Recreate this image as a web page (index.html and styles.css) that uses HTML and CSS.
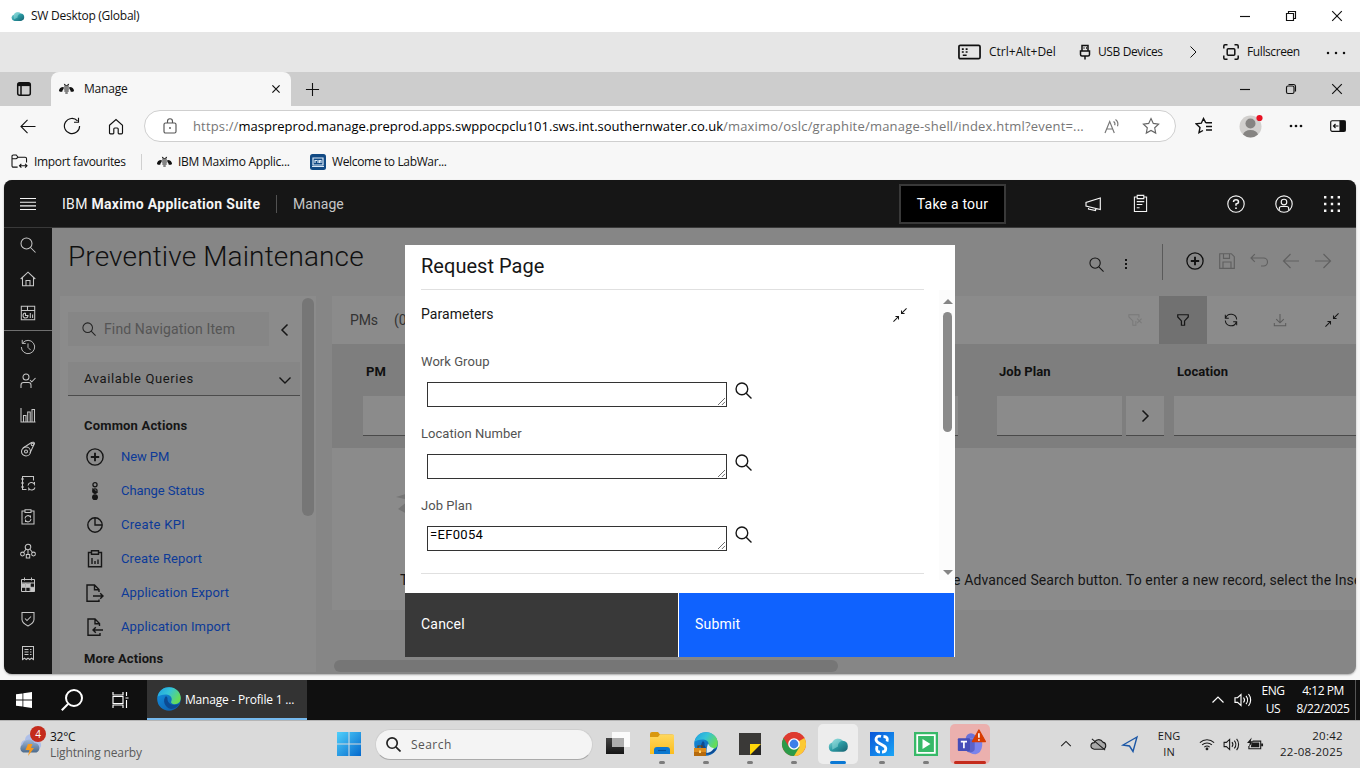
FILE: index.html
```html
<!DOCTYPE html>
<html lang="en">
<head>
<meta charset="utf-8">
<title>Manage</title>
<link rel="stylesheet" href="styles.css">
</head>
<body>
<svg class="defs" width="0" height="0" aria-hidden="true">
  <defs>
    <linearGradient id="gCloud" x1="0" y1="0" x2="1" y2="1"><stop offset="0" stop-color="#8fe0e0"/><stop offset=".5" stop-color="#2a9aa3"/><stop offset="1" stop-color="#17606f"/></linearGradient>
    <linearGradient id="gWin" x1="0" y1="0" x2="1" y2="1"><stop offset="0" stop-color="#4fd0fb"/><stop offset="1" stop-color="#0568cc"/></linearGradient>
    <linearGradient id="gEdgeA" x1="0" y1="0" x2="1" y2=".5"><stop offset="0" stop-color="#1f9fe0"/><stop offset=".5" stop-color="#35c3d8"/><stop offset="1" stop-color="#66dc58"/></linearGradient>
    <linearGradient id="gEdgeB" x1="0" y1="0" x2="1" y2="1"><stop offset="0" stop-color="#1593e2"/><stop offset="1" stop-color="#0b56a5"/></linearGradient>
    <linearGradient id="gFold" x1="0" y1="0" x2="0" y2="1"><stop offset="0" stop-color="#ffd85e"/><stop offset="1" stop-color="#fbbd1e"/></linearGradient>
    <linearGradient id="gStorm" x1="0" y1="0" x2="0" y2="1"><stop offset="0" stop-color="#9fb6d6"/><stop offset="1" stop-color="#4c6b8c"/></linearGradient>
    <linearGradient id="gTask" x1="0" y1="0" x2="0" y2="1"><stop offset="0" stop-color="#444"/><stop offset="1" stop-color="#151515"/></linearGradient>
    <linearGradient id="gSnag" x1="0" y1="0" x2="1" y2="1"><stop offset="0" stop-color="#0a55d8"/><stop offset="1" stop-color="#1aa6f6"/></linearGradient>
  </defs>
  <symbol id="cloud" viewBox="0 0 20 16"><path d="M5 15a4.500 4.500 0 0 1-1-8.800A6 6 0 0 1 14 4.500a5.300 5.300 0 0 1 .5 10.500z" fill="url(#gCloud)"/><path d="M4 6.200a6 6 0 0 1 10-1.700c-3 .3-5 3-4.500 5.500L4 13z" fill="#a9e8e6" opacity=".45"/></symbol>
  <symbol id="min" viewBox="0 0 16 16"><path d="M3 8.500h10"/></symbol>
  <symbol id="restore" viewBox="0 0 16 16"><path d="M3.500 5.500h7v7h-7zM5.500 5.500v-2h7v7h-2"/></symbol>
  <symbol id="restore-r" viewBox="0 0 16 16"><rect x="3.500" y="5" width="7.500" height="7.500" rx="1.500"/><path d="M5.500 3.500h5a2 2 0 0 1 2 2v5"/></symbol>
  <symbol id="close" viewBox="0 0 16 16"><path d="M3.200 3.200l9.600 9.600M12.800 3.200l-9.600 9.600"/></symbol>
  <symbol id="keyboard" viewBox="0 0 24 16"><rect x="1" y="1" width="22" height="14" rx="1.500" stroke-width="1.800"/><path d="M4 5h2M8 5h2M4 8h2M8 8h2M5 11.500h4" stroke-width="1.600"/></symbol>
  <symbol id="usb" viewBox="0 0 12 16"><path d="M3 7V1.500h6V7M1.500 7h9v3.500q0 1.500-1.500 1.500H3q-1.500 0-1.500-1.500zM6 12v3.500M4.500 4h1M7 4h1" stroke-width="1.500"/></symbol>
  <symbol id="full" viewBox="0 0 16 16"><path d="M.8 4.500V2q0-1.200 1.200-1.200h2.500M11.500.8H14q1.200 0 1.200 1.200v2.500M15.200 11.500V14q0 1.200-1.200 1.200h-2.500M4.500 15.200H2Q.8 15.200.8 14v-2.500"/><rect x="4.200" y="4.800" width="7.600" height="6.400" rx="1"/></symbol>
  <symbol id="chev-r" viewBox="0 0 16 16"><path d="M5.500 2.500L11 8l-5.500 5.500"/></symbol>
  <symbol id="chev-l" viewBox="0 0 16 16"><path d="M10.500 2.500L5 8l5.500 5.500"/></symbol>
  <symbol id="chev-d" viewBox="0 0 16 16"><path d="M2.500 5.500L8 11l5.500-5.500"/></symbol>
  <symbol id="chev-u" viewBox="0 0 16 16"><path d="M2.500 10.500L8 5l5.500 5.500"/></symbol>
  <symbol id="dots" viewBox="0 0 20 4"><g fill="currentColor" stroke="none"><circle cx="2" cy="2" r="1.250"/><circle cx="10" cy="2" r="1.250"/><circle cx="18" cy="2" r="1.250"/></g></symbol>
  <symbol id="dots-s" viewBox="0 0 14 4"><g fill="currentColor" stroke="none"><circle cx="2" cy="2" r="1.350"/><circle cx="7" cy="2" r="1.350"/><circle cx="12" cy="2" r="1.350"/></g></symbol>
  <symbol id="tabs" viewBox="0 0 16 16"><rect x="1.700" y="1.700" width="12.600" height="12.600" rx="2"/><path d="M2 3.500h12" stroke-width="3.200"/><path d="M5 4v10"/></symbol>
  <symbol id="bee" viewBox="0 0 18 14"><g fill="currentColor" stroke="none"><path d="M1 9C1.200 6.500 3.200 4.800 6 5v1.800L4.800 8.500 4.500 10H2.200zM17 9C16.800 6.500 14.800 4.800 12 5v1.800l1.200 1.700.3 1.500h2.300zM6.200 1.500l1.300.2.700 1h1.600l.7-1 1.300-.2-.8 2H7zM6.500 4.300h5v1.200h-5zM6.500 6.400h5v1.200h-5zM6.700 8.500h4.600v1.200H6.700zM7.700 10.600h2.600v1.200H7.700z"/></g></symbol>
  <symbol id="plus" viewBox="0 0 16 16"><path d="M8 1v14M1 8h14"/></symbol>
  <symbol id="back" viewBox="0 0 18 16"><path d="M17 8H1.500M8.500 1L1.500 8l7 7"/></symbol>
  <symbol id="fwd" viewBox="0 0 18 16"><path d="M1 8h15.500M9.500 1l7 7-7 7"/></symbol>
  <symbol id="reload" viewBox="0 0 18 18"><path d="M14.500 3.800A7.600 7.600 0 1 0 16.600 9M15.500.8v4.400h-4.500"/></symbol>
  <symbol id="home" viewBox="0 0 16 17"><path d="M1.500 7.200L8 1.500l6.500 5.700v7.600q0 1-1 1H11q-.8 0-.8-.8V11q0-1-1-1H6.800q-1 0-1 1v4q0 .8-.8.800H2.500q-1 0-1-1z"/></symbol>
  <symbol id="lock" viewBox="0 0 14 16"><rect x="1" y="5" width="12" height="10" rx="1.500"/><path d="M4.500 5V3.200a2.500 2.500 0 0 1 5 0V5"/><circle cx="7" cy="10" r=".9" fill="currentColor" stroke="none"/></symbol>
  <symbol id="read" viewBox="0 0 16 16"><path d="M1 15L5.700 3.500 10.300 15M2.600 11h6.200M9.500 3.500a3 3 0 0 1 1.200 3.700M11.500 1.500a6 6 0 0 1 2 6.700"/></symbol>
  <symbol id="star" viewBox="0 0 18 18"><path d="M9 1.500l2.300 4.900 5.300.700-3.900 3.700 1 5.300L9 13.500l-4.700 2.600 1-5.300L1.400 7.100l5.300-.7z"/></symbol>
  <symbol id="favs" viewBox="0 0 18 18"><path d="M10.800 5.800L8.500 1.500 6.300 6.200 1.200 6.900l3.800 3.600-1 5.200 4-2.200M10.800 5.800H17M11 9.500h6M11 13h6" stroke-width="1.400"/></symbol>
  <symbol id="side" viewBox="0 0 16 12"><rect x=".7" y=".7" width="14.600" height="10.600" rx="1.500"/><path d="M10 1h5v10h-5z" fill="currentColor"/><path d="M8.500 6H3.500M5.500 4l-2 2 2 2"/></symbol>
  <symbol id="import" viewBox="0 0 18 16"><path d="M7 14H2.500Q1 14 1 12.500v-10Q1 1 2.500 1h3l2 2.500H15q1.500 0 1.500 1.500v4M1 5h4.500l2-1.500M9 12.500h8M11 10.500l-2 2 2 2M15 10.500l2 2-2 2"/></symbol>
  <symbol id="menu" viewBox="0 0 16 12"><path d="M0 .5h16M0 4.200h16M0 7.800h16M0 11.500h16"/></symbol>
  <symbol id="horn" viewBox="0 0 18 16"><path d="M16.300 2v11.500L2 10V6.500zM4.500 10.800V13l7 1.500v-2.200"/></symbol>
  <symbol id="clip" viewBox="0 0 16 20"><path d="M4.500 3H1.500v15.500h13V3h-3M4.500 1.300h7v3.500h-7zM4 8h8M4 11h6M4 14.500h3"/></symbol>
  <symbol id="help" viewBox="0 0 18 18"><circle cx="9" cy="9" r="8.200"/><path d="M6.500 7q0-2.200 2.500-2.200T11.500 7Q11.500 8.500 9 9v1.800" stroke-width="1.500"/><circle cx="9" cy="13.200" r=".9" fill="currentColor" stroke="none"/></symbol>
  <symbol id="user" viewBox="0 0 18 18"><circle cx="9" cy="9" r="8.200"/><circle cx="9" cy="7" r="2.800"/><path d="M4.300 15v-1.500q0-2 2-2h5.400q2 0 2 2V15"/></symbol>
  <symbol id="grid" viewBox="0 0 18 18"><g fill="currentColor" stroke="none"><path d="M1 1h2.400v2.400H1zM7.800 1h2.400v2.400H7.800zM14.600 1H17v2.400h-2.400zM1 7.800h2.400v2.400H1zM7.800 7.800h2.400v2.400H7.800zM14.600 7.800H17v2.400h-2.400zM1 14.600h2.400V17H1zM7.800 14.600h2.400V17H7.800zM14.600 14.600H17V17h-2.400z"/></g></symbol>
  <symbol id="search" viewBox="0 0 16 16"><circle cx="6.500" cy="6.500" r="5.500"/><path d="M10.500 10.500L15.500 15.500"/></symbol>
  <symbol id="chome" viewBox="0 0 16 16"><path d="M.7 8L8 1.200 15.300 8M2.500 6.500v8.300h11V6.500M6 14.800V9.500h4v5.300"/></symbol>
  <symbol id="dash" viewBox="0 0 16 16"><path d="M1.300 1.300h13.400v13.400H1.300zM1.300 5.500h13.400M7.500 1.500v4M10.300 8v5M12.600 9.500V13M5.500 8v2.500H8A2.500 2.500 0 1 1 5.500 8"/></symbol>
  <symbol id="hist" viewBox="0 0 18 18"><path d="M3 4.500A7.500 7.500 0 1 1 1.500 9M2.500 1v4h4M9 5v4.500l3 3"/></symbol>
  <symbol id="ucheck" viewBox="0 0 16 16"><circle cx="6" cy="4" r="3"/><path d="M1 15v-3q0-2.500 2.500-2.500h5Q11 9.500 11 12v3M10 7l1.800 1.800L15.500 5"/></symbol>
  <symbol id="bars" viewBox="0 0 16 16"><path d="M1 1v14h14.500M3.500 15V8.500H6V15M7.700 15V5h2.500v10M12 15V2.500h2.500V15"/></symbol>
  <symbol id="meteor" viewBox="0 0 16 16"><circle cx="6" cy="10.500" r="4.500"/><circle cx="6" cy="10.500" r="1.500"/><path d="M3 7l8.500-5.500q2.500-1 3 1L10 12"/><circle cx="12.500" cy="3.500" r="1.300"/></symbol>
  <symbol id="book" viewBox="0 0 16 16"><path d="M6.500 14.500H2.500v-13h11v4M1 4h3M1 8h3M1 12h3M8 10.500a3.500 3.500 0 0 1 6.500-1.300V7M15 12.500a3.500 3.500 0 0 1-6.200 1V15.500"/></symbol>
  <symbol id="wclip" viewBox="0 0 16 16"><path d="M5 2H2v13h12V2h-3M5 .8h6v2.700H5zM5 9.500a3 3 0 0 1 5.500-1.500V6.500M11 10a3 3 0 0 1-5.500 1.500V13"/></symbol>
  <symbol id="net" viewBox="0 0 16 16"><circle cx="8" cy="4" r="2.800"/><path d="M6 6.200L3.800 9M10 6.200L12.200 9M8 7v4M6.300 11.500h3.400v3.500H6.300z"/><circle cx="2.500" cy="11" r="1.900"/><circle cx="13.500" cy="11" r="1.900"/></symbol>
  <symbol id="cal" viewBox="0 0 16 16"><path d="M1.500 2.500h13v12h-13zM1.500 6h13M4.500.5v3M11.500.5v3M1.500 10.300h13M5.800 6v8.500M10.200 6v8.500" stroke-width="1"/><path d="M6 6.500h4v3.500H6zM10.500 10.500h4v4h-4zM2 6.500h3.500v3.500H2z" fill="currentColor" stroke="none"/></symbol>
  <symbol id="shield" viewBox="0 0 16 16"><path d="M2 1.500h12v7q0 3.500-6 6.500-6-3-6-6.500zM5 7.500l2 2L11 5.500"/></symbol>
  <symbol id="receipt" viewBox="0 0 16 16"><path d="M2.500 1.500h11v13l-2-1.300-1.800 1.300L8 13.200l-1.800 1.300-1.700-1.300-2 1.300zM4.500 4.500h4M10 4.500h1.500M4.500 7h4M10 7h1.500M4.500 9.500h4M10 9.500h1.500"/></symbol>
  <symbol id="addc" viewBox="0 0 18 18"><circle cx="9" cy="9" r="8.100"/><path d="M9 4.800v8.400M4.800 9h8.400" stroke-width="1.900"/></symbol>
  <symbol id="status" viewBox="0 0 8 20"><circle cx="4" cy="3" r="2.300"/><circle cx="4" cy="10" r="2.300"/><path d="M1.800 8L6 11.500 4 12.500 1.800 11z" fill="currentColor"/><circle cx="4" cy="17" r="2.600" fill="currentColor"/></symbol>
  <symbol id="pie" viewBox="0 0 18 18"><circle cx="9" cy="9" r="7.200"/><path d="M9 2v7h7"/></symbol>
  <symbol id="rep" viewBox="0 0 18 18"><path d="M5.500 2.500h-3v14.300h13V2.500h-3M5.500.8h7v3.500h-7zM6 14V8M9 14v-3M12 14V9.500"/></symbol>
  <symbol id="exp" viewBox="0 0 18 18"><path d="M13 15.500v1.700H1V1h7.500L13 5.500V8M8.500 1v4.700H13M7 12h10M14.200 9.200L17 12l-2.800 2.800"/></symbol>
  <symbol id="imp" viewBox="0 0 18 18"><path d="M14 15v2.200H2V1h7L13.500 5.500V8M9 1v4.700h4.500M17 12H7M9.800 9.200L7 12l2.800 2.800"/></symbol>
  <symbol id="save" viewBox="0 0 16 16"><path d="M.7.7h11.600l3 3v11.600H.7zM4.500.8v4.500h6V.8M4 15V9h8v6"/></symbol>
  <symbol id="undo" viewBox="0 0 18 16"><path d="M1 5h12.500a4 4 0 0 1 0 8H11M4.800 1.200L1 5l3.800 3.800"/></symbol>
  <symbol id="funnel" viewBox="0 0 16 16"><path d="M2 2h12v2.500L9.800 9v5H6.200V9L2 4.500z"/></symbol>
  <symbol id="funnelx" viewBox="0 0 16 16"><path d="M12.500 5V2H1v2.500L5.500 9v5H9V9M10.500 6.500l5 5M15.500 6.500l-5 5"/></symbol>
  <symbol id="sync" viewBox="0 0 16 16"><path d="M2 5.500A6.500 6.500 0 0 1 14.500 7.500M14 10.500A6.500 6.500 0 0 1 1.500 8.500M1.500 2v4h4M14.500 14v-4h-4"/></symbol>
  <symbol id="down" viewBox="0 0 16 16"><path d="M8 1v10M3.700 7L8 11.200 12.300 7M1.500 11.500v3h13v-3"/></symbol>
  <symbol id="mini" viewBox="0 0 16 16"><path d="M15.500.5l-5.700 5.700M9.700 2.800v3.500h3.500M.5 15.500l5.700-5.700M2.800 9.700h3.500v3.500"/></symbol>
  <symbol id="spk" viewBox="0 0 18 14"><path d="M1 4.700h2.500L7 1.500v11L3.500 9.300H1zM9.500 4.500a4 4 0 0 1 0 5M12 2.800a6.500 6.500 0 0 1 0 8.400M14.500 1a9.500 9.500 0 0 1 0 12"/></symbol>
  <symbol id="edge" viewBox="0 0 24 24"><circle cx="12" cy="12" r="11.800" fill="url(#gEdgeB)"/><path d="M.6 9.500C2 3.500 6.500.2 12 .2 19 .2 23.800 5.200 23.800 11c0 3.800-2.500 6.200-6 6.200-3 0-4.300-1.300-3.600-2.600 1.800-3.600-.8-6.900-4.900-7.200C5.500 7.200 2 8.500.6 9.500z" fill="url(#gEdgeA)"/><path d="M9 9c-4 4-1.500 11.500 5 13 4 0 6.800-2.300 8.300-5.200-6 3-12.500 0-11.800-6.100z" fill="#0c4a92"/></symbol>
</svg>

<div class="screen">
  <header class="vm-title">
    <svg class="vm-logo"><use href="#cloud"/></svg>
    <span class="vm-name">SW Desktop (Global)</span>
    <div class="win-btns"><svg class="i16"><use href="#min"/></svg><svg class="i16"><use href="#restore"/></svg><svg class="i16"><use href="#close"/></svg></div>
  </header>

  <div class="vm-bar">
    <svg class="ic-kb"><use href="#keyboard"/></svg><span class="vb-cad">Ctrl+Alt+Del</span>
    <svg class="ic-usb"><use href="#usb"/></svg><span class="vb-usb">USB Devices</span>
    <svg class="ic-chev"><use href="#chev-r"/></svg>
    <svg class="ic-full"><use href="#full"/></svg><span class="vb-full">Fullscreen</span>
    <svg class="ic-more"><use href="#dots"/></svg>
  </div>

  <div class="tabs">
    <div class="tab-menu"><svg class="i16"><use href="#tabs"/></svg></div>
    <div class="tab"><svg class="bee"><use href="#bee"/></svg><span class="tab-name">Manage</span><svg class="tab-x"><use href="#close"/></svg></div>
    <svg class="tab-plus"><use href="#plus"/></svg>
    <div class="win-btns"><svg class="i16"><use href="#min"/></svg><svg class="i16"><use href="#restore-r"/></svg><svg class="i16"><use href="#close"/></svg></div>
  </div>

  <div class="nav">
    <svg class="n-back"><use href="#back"/></svg>
    <svg class="n-rel"><use href="#reload"/></svg>
    <svg class="n-home"><use href="#home"/></svg>
    <div class="url">
      <svg class="u-lock"><use href="#lock"/></svg>
      <span class="u-text"><span class="u-a">https://</span><span class="u-host">maspreprod.manage.preprod.apps.swppocpclu101.sws.int.southernwater.co.uk</span><span class="u-b">/maximo/oslc/graphite/manage-shell/index.html?event=...</span></span>
      <svg class="u-read"><use href="#read"/></svg><svg class="u-star"><use href="#star"/></svg>
    </div>
    <svg class="n-favs"><use href="#favs"/></svg>
    <svg class="n-avatar" viewBox="0 0 24 24"><circle cx="11.500" cy="12.500" r="11" fill="#d2d0ce"/><circle cx="11.500" cy="9.500" r="5" fill="#868482"/><path d="M4 20.500q1.500-4.500 7.500-4.500t7.500 4.500a11 11 0 0 1-15 0z" fill="#868482"/><circle cx="20.500" cy="4" r="3.100" fill="#e81123"/></svg>
    <svg class="n-more"><use href="#dots-s"/></svg>
    <svg class="n-side"><use href="#side"/></svg>
  </div>

  <div class="favs">
    <svg class="f-imp"><use href="#import"/></svg><span class="f-t1">Import favourites</span><i class="f-sep"></i>
    <svg class="bee"><use href="#bee"/></svg><span class="f-t2">IBM Maximo Applic...</span>
    <svg class="f-lab" viewBox="0 0 16 16"><rect width="16" height="16" rx="2.500" fill="#124a84"/><path d="M3 4h10v7H3zM2 12.500h12" fill="none" stroke="#dbe9f7" stroke-width="1.200"/><path d="M5 9V6.500h2M8 6v3M9.500 9V6.500h1.500V9" fill="none" stroke="#dbe9f7"/></svg><span class="f-t3">Welcome to LabWar...</span>
  </div>

  <div class="page">
    <div class="app">
      <div class="app-head">
        <svg class="h-menu"><use href="#menu"/></svg>
        <span class="h-brand">IBM <b>Maximo Application Suite</b></span>
        <span class="h-prod">Manage</span>
        <span class="h-tour">Take a tour</span>
        <svg class="h-horn"><use href="#horn"/></svg>
        <svg class="h-clip"><use href="#clip"/></svg>
        <svg class="h-help"><use href="#help"/></svg>
        <svg class="h-user"><use href="#user"/></svg>
        <svg class="h-grid"><use href="#grid"/></svg>
      </div>
      <div class="app-body">
        <nav class="rail">
          <div class="rail-top">
            <svg><use href="#search"/></svg><svg><use href="#chome"/></svg><svg><use href="#dash"/></svg>
          </div>
          <svg><use href="#hist"/></svg><svg><use href="#ucheck"/></svg><svg><use href="#bars"/></svg><svg><use href="#meteor"/></svg><svg><use href="#book"/></svg><svg><use href="#wclip"/></svg><svg><use href="#net"/></svg><svg><use href="#cal"/></svg><svg><use href="#shield"/></svg><svg><use href="#receipt"/></svg>
        </nav>
        <main class="main">
          <div class="top">
            <h1>Preventive Maintenance</h1>
            <div class="top-find"><svg class="t-s"><use href="#search"/></svg><svg class="t-dots" viewBox="0 0 4 12"><path d="M1 1h2v2H1zM1 5h2v2H1zM1 9h2v2H1z" fill="currentColor" stroke="none"/></svg></div>
            <div class="top-acts"><svg class="strong"><use href="#addc"/></svg><svg class="sv"><use href="#save"/></svg><svg><use href="#undo"/></svg><svg><use href="#back"/></svg><svg><use href="#fwd"/></svg></div>
          </div>
          <div class="cols">
            <aside class="side">
              <div class="side-main">
                <div class="find"><div class="find-box"><svg><use href="#search"/></svg><span>Find Navigation Item</span></div><svg class="find-chev"><use href="#chev-l"/></svg></div>
                <div class="queries"><span>Available Queries</span><svg><use href="#chev-d"/></svg></div>
                <h2 class="ca">Common Actions</h2>
                <ul class="acts">
                  <li><svg><use href="#addc"/></svg><a class="a1">New PM</a></li>
                  <li><svg><use href="#status"/></svg><a class="a2">Change Status</a></li>
                  <li><svg><use href="#pie"/></svg><a class="a3">Create KPI</a></li>
                  <li><svg><use href="#rep"/></svg><a class="a4">Create Report</a></li>
                  <li><svg><use href="#exp"/></svg><a class="a5">Application Export</a></li>
                  <li><svg><use href="#imp"/></svg><a class="a6">Application Import</a></li>
                </ul>
                <h2 class="ma">More Actions</h2>
              </div>
              <div class="side-scroll"></div>
            </aside>
            <section class="list">
              <div class="list-card">
                <div class="list-bar"><span class="pms">PMs</span><span class="cnt">(0)</span>
                  <div class="tools"><div class="tool faint"><svg><use href="#funnelx"/></svg></div><div class="tool on"><svg><use href="#funnel"/></svg></div><div class="tool"><svg><use href="#sync"/></svg></div><div class="tool dim"><svg><use href="#down"/></svg></div><div class="tool"><svg><use href="#mini"/></svg></div></div>
                </div>
                <div class="cols-head">
                  <div class="c c-pm"><b>PM</b><div class="cell"></div></div>
                  <div class="c c-jp"><b>Job Plan</b><div class="pair"><div class="cell"></div><div class="cell go"><svg><use href="#chev-r"/></svg></div></div></div>
                  <div class="c c-loc"><b>Location</b><div class="cell"></div></div>
                </div>
                <div class="empty">
                  <svg class="empty-art" viewBox="0 0 30 32"><path d="M0 8l26-8v14zM2 20l10-8 12 20z" fill="#757575" stroke="none"/></svg>
                  <p><span class="e1">To</span><span class="e2">e Advanced Search button. To enter a new record, select the Insert</span></p>
                </div>
              </div>
              <div class="hscroll"></div>
            </section>
          </div>
        </main>
      </div>
    </div>
    <div class="dialog">
      <div class="d-title">Request Page</div>
      <div class="d-body">
        <div class="d-form">
          <div class="d-par"><span>Parameters</span><svg><use href="#mini"/></svg></div>
          <label class="l1">Work Group</label>
          <div class="fld"><div class="ta"><svg viewBox="0 0 9 9"><path d="M0 9l9-9M5 9l4-4"/></svg></div><svg class="lk"><use href="#search"/></svg></div>
          <label class="l2">Location Number</label>
          <div class="fld"><div class="ta"><svg viewBox="0 0 9 9"><path d="M0 9l9-9M5 9l4-4"/></svg></div><svg class="lk"><use href="#search"/></svg></div>
          <label class="l3">Job Plan</label>
          <div class="fld"><div class="ta"><span>=EF0054</span><svg viewBox="0 0 9 9"><path d="M0 9l9-9M5 9l4-4"/></svg></div><svg class="lk"><use href="#search"/></svg></div>
        </div>
        <div class="d-scroll"><i class="up"></i><i class="thumb"></i><i class="dn"></i></div>
      </div>
      <div class="d-btns"><div class="cancel">Cancel</div><div class="submit">Submit</div></div>
    </div>
  </div>

  <div class="bar10">
    <svg class="w10" viewBox="0 0 16 16"><path d="M0 2.300l6.500-.9v6.200H0zM7.300 1.300L16 0v7.600H7.300zM0 8.400h6.500v6.200L0 13.700zM7.300 8.400H16V16l-8.700-1.300z" fill="#fff" stroke="none"/></svg>
    <svg class="s10" viewBox="0 0 22 22"><circle cx="13" cy="9" r="8"/><path d="M7 15L.8 21.200"/></svg>
    <svg class="tv" viewBox="0 0 17 16"><path d="M1 0v3h10V0M1 16v-3h10v3M1 4.500h10v7H1zM14.500 0v4M14.500 8v8M13.500 6h3" /></svg>
    <div class="run"><svg><use href="#edge"/></svg><span>Manage - Profile 1 ...</span></div>
    <div class="tray10">
      <svg class="t10-up"><use href="#chev-u"/></svg><svg class="t10-spk"><use href="#spk"/></svg>
      <div class="two lang10"><span>ENG</span><span>US</span></div>
      <div class="two clock10"><span class="ck1">4:12 PM</span><span class="ck2">8/22/2025</span></div>
      <i class="peek"></i>
    </div>
  </div>

  <div class="bar11">
    <div class="weather">
      <svg viewBox="0 0 28 28"><path d="M6 17a5 5 0 0 1 2-9 6 6 0 0 1 12 0 5 5 0 0 1 2 9z" fill="#aebfe8"/><path d="M6 20.500a4.500 4.500 0 0 1-.5-8 6.500 6.500 0 0 1 12-1.500 5 5 0 0 1 2 9.500z" fill="url(#gStorm)"/><path d="M11 12h4.500l-1.500 4h3l-6 8 1.500-6H8.500z" fill="#f7991c"/></svg>
      <span class="badge">4</span>
      <div class="wx"><span class="wx1">32°C</span><span class="wx2">Lightning nearby</span></div>
    </div>
    <svg class="w11" viewBox="0 0 23 23"><path d="M0 0h11v11H0zM12 0h11v11H12zM0 12h11v11H0zM12 12h11v11H12z" fill="url(#gWin)" stroke="none"/></svg>
    <div class="s11"><svg><use href="#search"/></svg><span>Search</span></div>
    <div class="pins">
      <div class="pin"><svg viewBox="0 0 24 24"><path d="M0 6h18v16H0z" fill="url(#gTask)"/><path d="M6 0h18v15H6z" fill="#fbfbfb"/><path d="M6 6h12v9H6z" fill="#aeaeae"/></svg></div>
      <div class="pin run1"><svg viewBox="0 0 24 24"><path d="M0 2q0-2 2-2h6l2 2.500H22q2 0 2 2V8H0z" fill="#d9980e"/><path d="M0 5h8l2-2.500h13q1 0 1 1V22H0z" fill="url(#gFold)"/><path d="M4 22v-4q0-3 3-3h10q3 0 3 3v4z" fill="#0b78d0"/><path d="M8 18.500h8" stroke="#07529a"/></svg></div>
      <div class="pin run1"><svg viewBox="0 0 24 24"><use href="#edge"/><path d="M12.500 17l1.500-5.500q2 4.500 6 4.500c-1.500 3-4 4.500-7.500 5z" fill="#dceef7"/><path d="M0 16h12v8H0z" fill="#b56a0d"/><path d="M0 16h12v4H0z" fill="#dc8b1b"/><path d="M4 16v-2h4v2" fill="none" stroke="#70400a"/><path d="M5 18.500h2v2.500H5z" fill="#ffd877"/></svg></div>
      <div class="pin run1"><svg viewBox="0 0 24 24"><path d="M1 1h22v11L12 23H1z" fill="#3a3937"/><path d="M12 12h11v11H12z" fill="#262626"/><path d="M12 12h11L12 23z" fill="#ffd60a"/></svg></div>
      <div class="pin run1"><svg viewBox="0 0 24 24"><circle cx="12" cy="12" r="12" fill="#de3b30"/><path d="M12 12l10.400-6A12 12 0 0 1 12 24z" fill="#fcc934"/><path d="M1.600 6A12 12 0 0 0 12 24l5.500-9z" fill="#2b9b49"/><path d="M1.600 6L7 15l5-9h10.400A12 12 0 0 0 1.600 6z" fill="#de3b30"/><circle cx="12" cy="12" r="5.800" fill="#fff"/><circle cx="12" cy="12" r="4.400" fill="#3b7fe8"/></svg></div>
      <div class="pin active"><svg class="pc"><use href="#cloud"/></svg></div>
      <div class="pin run1"><svg viewBox="0 0 24 24"><path d="M0 0h24v24H0z" fill="url(#gSnag)"/><path d="M11 4.500C6 3 4.500 8 8 10.500l6 3.500c3 2 2 6-2 6M13.500 4.500c3.500 0 4.500 2 3.500 5M7 14c-1 4 0 6 3 6.200" fill="none" stroke="#fff" stroke-width="2.800"/></svg></div>
      <div class="pin run1"><svg viewBox="0 0 24 24"><path d="M0 0h24v24H0z" fill="#37b968"/><path d="M3.200 3.200h17.600v17.600H3.200z" fill="none" stroke="#fff" stroke-width="1.800"/><path d="M8.500 7l8 5-8 5z" fill="#fff"/></svg></div>
      <div class="pin alert"><svg viewBox="0 0 32 32"><circle cx="17" cy="11" r="5.500" fill="#6b72d8"/><path d="M16 11h13v8q-1 8-7 9-7 0-8-6z" fill="#7b83eb"/><path d="M13 12h8v11q-1 3-5 3-3 0-4-2z" fill="#5b62c9"/><rect x="3" y="11" width="13" height="13.500" rx="1" fill="#464eb8"/><path d="M6.200 14.500h6.600M9.500 14.500v7" stroke="#fff" stroke-width="1.800"/><path d="M25.500 2l7 12.500h-14z" fill="#d83b01" stroke="#d83b01" stroke-linejoin="round"/><path d="M25.500 5.500v5M25.500 12v1.700" stroke="#fff" stroke-width="1.700"/></svg></div>
    </div>
    <div class="tray11">
      <svg class="y-up"><use href="#chev-u"/></svg>
      <svg class="y-cloud" viewBox="0 0 18 14"><path d="M4.500 12.500a3.500 3.500 0 0 1 0-7A5 5 0 0 1 13.500 5a3.800 3.800 0 0 1 0 7.500z" fill="#a9a9a9"/><path d="M2 1.500l14 12"/></svg>
      <svg class="y-loc" viewBox="0 0 16 16"><path d="M15 1L1 9l6.500 1 3.500 5.500z"/></svg>
      <div class="two lang11"><span>ENG</span><span>IN</span></div>
      <svg class="y-wifi" viewBox="0 0 18 14"><path d="M1 5.500a11.500 11.500 0 0 1 16 0M3.500 8a8 8 0 0 1 11 0M6 10.500a4.500 4.500 0 0 1 6 0"/><circle cx="9" cy="12.500" r="1" fill="currentColor"/></svg>
      <svg class="y-spk"><use href="#spk"/></svg>
      <svg class="y-bat" viewBox="0 0 18 14"><path d="M6 4h8.500v8H2V9" /><path d="M5 5.500h8v5H4zM15 6.500h2v3h-2zM5 0L0 6h3l-1 4 5-6H4z" fill="currentColor" stroke="none"/></svg>
      <div class="two clock11"><span class="cl1">20:42</span><span class="cl2">22-08-2025</span></div>
    </div>
  </div>
</div>
</body>
</html>
```
FILE: styles.css
```css
* { box-sizing: border-box; }
body { margin: 0; background: #fff; font-family: "Open Sans", "Noto Sans", sans-serif; color: #111; overflow: hidden; }
.defs { position: absolute; }
svg { fill: none; stroke: currentColor; stroke-width: 1.15; flex: none; display: block; overflow: visible; }
span, b, a, label { white-space: nowrap; }
.screen { width: 1360px; height: 768px; display: flex; flex-direction: column; overflow: hidden; background: #f7f7f7; }
.i16 { width: 16px; height: 16px; }

/* Remote session window */
.vm-title { height: 32px; flex: none; background: #fff; display: flex; align-items: center; padding-left: 11px; font-size: 12px; }
.vm-logo { width: 14px; height: 12px; stroke: none; }
.vm-name { margin: -1px 0 0 6px; letter-spacing: -.26px; }
.win-btns { margin-left: auto; display: flex; gap: 30px; padding-right: 15px; }
.vm-bar { height: 40px; flex: none; background: #e6e6e6; display: flex; align-items: center; font-size: 12px; padding-left: 958px; }
.vm-bar span { flex: none; margin-top: -1px; }
.ic-kb { width: 23px; height: 16px; margin-right: 8px; }
.vb-cad { width: 90px; letter-spacing: 0; }
.ic-usb { width: 12px; height: 16px; margin-right: 7px; }
.vb-usb { width: 87px; letter-spacing: -.38px; }
.ic-chev { width: 16px; height: 16px; margin-right: 22px; stroke-width: 1; }
.ic-full { width: 16px; height: 16px; margin-right: 8px; stroke-width: 1.500; }
.vb-full { width: 79px; letter-spacing: -.4px; }
.ic-more { width: 20px; height: 4px; margin-top: 1px; }

/* Browser tabs */
.tabs { height: 34px; flex: none; background: #cdcdcd; display: flex; align-items: center; font-size: 12px; }
.tab-menu { width: 51px; padding-left: 16px; }
.tab-menu svg { stroke-width: 1.500; }
.tab { width: 240px; height: 34px; background: #f7f7f7; border-radius: 8px 8px 0 0; display: flex; align-items: center; padding: 0 9px 0 7px; }
.bee { width: 17px; height: 14px; }
.tab-name { margin: -1px 0 0 9px; letter-spacing: -.2px; }
.tab-x { width: 12px; height: 12px; margin-left: auto; stroke-width: 1.600; }
.tab-plus { width: 15px; height: 15px; margin-left: 14px; }

/* Address bar */
.nav { height: 40px; flex: none; display: flex; align-items: center; padding-left: 19px; }
.n-back { width: 18px; height: 15px; margin-right: 26px; }
.n-rel { width: 18px; height: 18px; margin-right: 27px; }
.n-home { width: 16px; height: 17px; margin-right: 20px; }
.url { width: 1032px; flex: none; height: 32px; border: 1px solid #cfcfcf; border-radius: 16px; background: #fff; display: flex; align-items: center; padding-left: 18px; }
.u-lock { width: 14px; height: 16px; color: #555; }
.u-text { margin-left: 16px; width: 911px; flex: none; font-size: 13px; color: #767676; }
.u-host { color: #000; letter-spacing: 0; }
.u-a { letter-spacing: .15px; }
.u-b { letter-spacing: .2px; }
.u-read { width: 16px; height: 16px; color: #777; }
.u-star { width: 18px; height: 18px; margin-left: 22px; color: #666; }
.n-favs { width: 18px; height: 18px; margin-left: 19px; }
.n-avatar { width: 24px; height: 24px; margin-left: 26px; stroke: none; }
.n-more { width: 14px; height: 4px; margin-left: 26px; }
.n-side { width: 16px; height: 12px; margin-left: 27px; }
.favs { height: 34px; flex: none; display: flex; align-items: center; padding: 0 0 3px 11px; font-size: 12px; }
.f-imp { width: 17px; height: 15px; margin-right: 6px; }
.f-t1 { width: 107px; letter-spacing: -.33px; }
.f-sep { width: 1px; height: 16px; background: #d0d0d0; margin-right: 14px; }
.f-t2 { margin-left: 5px; width: 132px; letter-spacing: -.25px; }
.f-lab { width: 16px; height: 16px; stroke: none; margin-right: 6px; }
.f-t3 { letter-spacing: -.36px; }

/* Application */
.page { position: relative; height: 500px; flex: none; padding: 0 4px; font-family: Roboto, "Noto Sans", sans-serif; }
.app { height: 494px; border-radius: 8px; overflow: hidden; background: #868686; box-shadow: 0 1px 2px #aaa; }
.app-head { height: 48px; background: #161616; border-bottom: 1px solid #393939; display: flex; align-items: center; color: #f4f4f4; font-size: 14px; padding-left: 16px; }
.app-head > * { flex: none; }
.h-menu { width: 16px; height: 12px; margin-right: 26px; }
.h-brand { width: 214px; letter-spacing: .31px; }
.h-prod { border-left: 1px solid #525252; height: 18px; line-height: 18px; padding-left: 16px; width: 623px; color: #c6c6c6; letter-spacing: .05px; }
.h-tour { width: 107px; height: 40px; line-height: 36px; border: 2px solid #393939; background: #000; color: #fff; text-align: center; letter-spacing: .22px; margin-right: 78px; }
.h-horn { width: 18px; height: 16px; margin-right: 31px; }
.h-clip { width: 15px; height: 19px; margin-right: 79px; }
.h-help, .h-user, .h-grid { width: 18px; height: 18px; margin-right: 30px; }
.h-grid { margin-right: 0; }
.app-body { display: flex; height: 446px; }
.rail { width: 48px; flex: none; background: #161616; color: #c6c6c6; }
.rail, .rail-top { display: flex; flex-direction: column; gap: 18px; padding-top: 9px; }
.rail svg { width: 16px; height: 16px; margin: 0 auto; stroke-width: 1.050; }
.rail-top { margin-top: -9px; width: 48px; height: 103px; flex: none; border-bottom: 1px solid #6f6f6f; margin-bottom: -10px; }
.main { flex: 1; min-width: 0; color: #161616; padding-left: 8px; }
.top { height: 68px; display: flex; padding-left: 8px; }
h1 { margin: 10px 0 0; width: 1021px; font-size: 28px; line-height: 38px; font-weight: 300; letter-spacing: .13px; color: #101010; }
.top-find { display: flex; align-items: center; width: 74px; height: 36px; margin-top: 16px; padding-top: 4px; border-right: 1px solid #5a5a5a; gap: 20px; }
.t-s { width: 15px; height: 15px; }
.t-dots { width: 4px; height: 12px; }
.top-acts { display: flex; gap: 14px; align-items: center; height: 36px; margin: 15px 0 0 23px; color: #606060; }
.top-acts svg { width: 18px; height: 16px; }
.top-acts .strong { width: 18px; height: 18px; color: #111; stroke-width: 1.300; }
.cols { display: flex; gap: 16px; height: 378px; }
.side { width: 256px; flex: none; background: #8b8b8b; height: 376px; padding: 0 2px 0 8px; display: flex; font-size: 13px; overflow: hidden; }
.side-main { width: 232px; margin-right: 2px; padding-top: 16px; }
.side-scroll { width: 12px; height: 218px; margin-top: 2px; background: #767676; border-radius: 6px; }
.find { display: flex; align-items: center; height: 34px; }
.find-box { width: 201px; height: 34px; background: #868686; display: flex; align-items: center; gap: 8px; padding-left: 14px; color: #555; font-size: 14px; letter-spacing: .12px; }
.find-box svg { width: 14px; height: 14px; color: #222; }
.find-chev { width: 16px; height: 16px; margin: 2px 0 0 8px; stroke-width: 1.500; }
.queries { margin-top: 16px; height: 34px; background: #868686; border-bottom: 1px solid #4c4c4c; display: flex; align-items: center; justify-content: space-between; padding: 0 7px 0 16px; letter-spacing: .6px; }
.queries svg { width: 16px; height: 16px; stroke-width: 1.400; margin-top: 2px; }
h2 { margin: 0 0 0 16px; font-size: 13px; line-height: 18px; font-weight: 700; }
.ca { margin-top: 21px; letter-spacing: .18px; }
.ma { margin-top: 7px; letter-spacing: .08px; }
.acts { list-style: none; margin: 4px 0 0; padding: 0; }
.acts li { height: 34px; display: flex; align-items: center; padding-left: 18px; }
.acts svg { width: 18px; height: 18px; margin: 2px 17px 0 0; stroke-width: 1.400; }
.acts a { color: #0c3a98; letter-spacing: .12px; }
.acts .a1, .acts .a2 { letter-spacing: -.08px; }
.acts .a3 { letter-spacing: .3px; }
.list { flex: 1; min-width: 0; display: flex; flex-direction: column; }
.list-card { height: 314px; background: #8b8b8b; overflow: hidden; }
.list-bar { height: 48px; display: flex; align-items: center; padding-left: 18px; color: #333; font-size: 14px; }
.list-bar > * { flex: none; }
.pms { width: 44px; margin-top: -1px; letter-spacing: -.2px; }
.cnt { width: 717px; }
.tools { display: flex; }
.tool { width: 48px; height: 48px; display: grid; place-items: center; color: #161616; }
.tool svg { width: 14px; height: 14px; }
.on { background: #717171; }
.on svg { stroke-width: 1.400; }
.faint { color: #7a7a7a; }
.dim { color: #5b5b5b; }
.dim svg { margin-left: 2px; }
.tool:last-child svg { margin-left: 9px; }
.cols-head { height: 104px; background: #7e7e7e; display: flex; padding-left: 31px; font-size: 13px; letter-spacing: .05px; }
.c { padding-top: 19px; flex: none; }
.c b { display: block; height: 33px; line-height: 18px; margin-left: 3px; color: #101010; }
.c-pm { width: 595px; margin-right: 39px; }
.c-jp { width: 167px; margin-right: 10px; }
.c-jp b { margin-left: 2px; }
.c-loc { width: 200px; }
.cell { height: 40px; background: #8b8b8b; border-bottom: 1px solid #4a4a4a; }
.pair { display: flex; gap: 4px; }
.pair .cell { width: 125px; }
.pair .go { width: 38px; display: grid; place-items: center; }
.go svg { width: 16px; height: 16px; stroke-width: 1.500; }
.empty { padding: 41px 0 0 64px; }
.empty-art { width: 30px; height: 32px; }
.empty p { margin: 49px 0 0 4px; display: flex; font-size: 14px; line-height: 20px; letter-spacing: .12px; }
.e1 { width: 553px; flex: none; }
.hscroll { width: 504px; height: 12px; border-radius: 6px; background: #767676; margin: 50px 0 0 2px; }

/* Request dialog */
.dialog { position: absolute; left: 405px; top: 65px; width: 550px; height: 412px; background: #fff; color: #161616; display: flex; flex-direction: column; }
.d-title { height: 45px; width: 503px; margin-left: 16px; border-bottom: 1px solid #e0e0e0; font-size: 20px; line-height: 43px; font-weight: 400; letter-spacing: .03px; }
.d-body { display: flex; height: 303px; }
.d-form { width: 503px; height: 284px; margin-left: 16px; border-bottom: 1px solid #e0e0e0; font-size: 13px; color: #525252; }
.d-par { height: 48px; display: flex; align-items: center; justify-content: space-between; font-size: 14px; color: #161616; padding: 0 17px 1px 0; letter-spacing: .05px; }
.d-par svg { width: 14px; height: 14px; margin-top: 2px; }
.d-form label { display: block; height: 44px; padding-top: 14px; line-height: 20px; letter-spacing: .05px; }
.d-form .fld { display: flex; height: 28px; padding-left: 6px; color: #161616; }
.ta { width: 300px; height: 25px; border: 1px solid #333; position: relative; padding-left: 2px; font-size: 13px; line-height: 16px; color: #000; letter-spacing: .33px; }
.ta svg { position: absolute; right: 1px; bottom: 1px; width: 7px; height: 7px; stroke-width: 1.100; color: #555; }
.lk { width: 17px; height: 17px; margin-left: 8px; stroke-width: 1.300; }
.d-scroll { width: 16px; margin-left: 15px; padding: 9px 0 0 4px; background: #fcfcfc; height: 290px; }
.d-scroll i { display: block; }
.up { width: 0; border: 5px solid transparent; border-top-width: 0; border-bottom-color: #858585; margin-bottom: 8px; }
.thumb { width: 9px; height: 120px; border-radius: 5px; background: #8a8a8a; margin-bottom: 138px; }
.dn { width: 0; border: 5px solid transparent; border-bottom-width: 0; border-top-color: #858585; }
.d-btns { display: flex; gap: 1px; height: 64px; color: #fff; font-size: 14px; line-height: 62px; letter-spacing: .2px; }
.cancel { width: 273px; background: #393939; padding-left: 16px; }
.submit { width: 275px; background: #0f62fe; padding-left: 16px; }

/* Guest taskbar */
.bar10 { height: 40px; flex: none; background: #101010; display: flex; align-items: center; color: #fff; font-size: 12px; }
.w10 { width: 16px; height: 16px; margin: 0 29px 0 16px; }
.s10 { width: 22px; height: 22px; stroke-width: 2; margin-right: 29px; }
.tv { width: 17px; height: 16px; margin-right: 18px; }
.run { width: 160px; height: 40px; background: #333; border-bottom: 2px solid #76b9ed; display: flex; align-items: center; padding-left: 10px; gap: 4px; letter-spacing: -.2px; }
.run svg { width: 24px; height: 24px; stroke: none; }
.tray10 { margin-left: auto; display: flex; align-items: center; height: 40px; }
.t10-up { width: 16px; height: 16px; margin-right: 8px; }
.t10-spk { width: 18px; height: 14px; margin-right: 7px; }
.two { display: flex; flex-direction: column; }
.lang10 { line-height: 18px; width: 28px; align-items: center; letter-spacing: -.4px; }
.clock10 { line-height: 18px; width: 56px; align-items: center; margin: 0 4px 0 8px; letter-spacing: -.45px; }
.peek { width: 5px; height: 40px; border-left: 1px solid #555; }

/* Host taskbar */
.bar11 { height: 48px; flex: none; background: #dadada; border-top: 1px solid #b5b5b5; display: flex; align-items: center; font-size: 12px; padding-bottom: 1px; }
.bar11 > * { flex: none; }
.weather { display: flex; width: 337px; padding-left: 17px; position: relative; }
.weather > svg { width: 28px; height: 28px; stroke: none; margin-top: 4px; }
.badge { position: absolute; left: 30px; top: -2px; width: 16px; height: 16px; border-radius: 8px; background: #c42b1c; color: #fff; font-size: 10px; line-height: 16px; text-align: center; }
.wx { display: flex; flex-direction: column; line-height: 16px; margin: 1px 0 0 5px; }
.wx1 { letter-spacing: -.25px; }
.wx2 { color: #5a5a5a; letter-spacing: -.13px; }
.w11 { width: 24px; height: 24px; }
.s11 { width: 218px; height: 31px; margin-left: 14px; border-radius: 16px; background: #f4f4f4; border: 1px solid #cfcfcf; border-bottom-color: #aaa; display: flex; align-items: center; padding-left: 10px; font-size: 12px; color: #555; gap: 10px; letter-spacing: .45px; }
.s11 svg { width: 15px; height: 15px; stroke-width: 1.800; color: #222; }
.pins { display: flex; gap: 4px; margin-left: 5px; }
.pin { width: 40px; height: 40px; position: relative; display: grid; place-items: center; }
.pin svg { width: 24px; height: 24px; stroke: none; }
.pin::after { position: absolute; bottom: 0; left: 17px; width: 6px; height: 3px; border-radius: 2px; background: #7c7c7c; }
.run1::after { content: ""; }
.active { background: #ededed; border-radius: 5px; }
.active::after { content: ""; left: 12px; width: 16px; background: #0a78d4; }
.pin .pc { width: 21px; height: 17px; }
.alert { background: #ebb0ae; border-radius: 5px; }
.alert svg { width: 30px; height: 30px; margin-bottom: 2px; }
.alert::after { content: ""; left: 4px; width: 32px; background: #c42b1c; }
.tray11 { display: flex; align-items: center; margin-left: 69px; color: #1a1a1a; }
.y-up { width: 14px; height: 14px; margin-right: 17px; }
.y-cloud { width: 17px; height: 14px; margin-right: 15px; }
.y-loc { width: 16px; height: 16px; color: #1b57a6; margin-right: 18px; stroke-width: 1.400; }
.lang11 { width: 26px; align-items: center; line-height: 16px; margin-right: 17px; font-size: 11px; }
.y-wifi { width: 16px; height: 14px; margin-right: 8px; }
.y-spk { width: 17px; height: 13px; margin-right: 7px; }
.y-bat { width: 17px; height: 14px; margin-right: 15px; }
.clock11 { width: 64px; align-items: flex-end; line-height: 16px; font-size: 11.500px; letter-spacing: .3px; }
```
